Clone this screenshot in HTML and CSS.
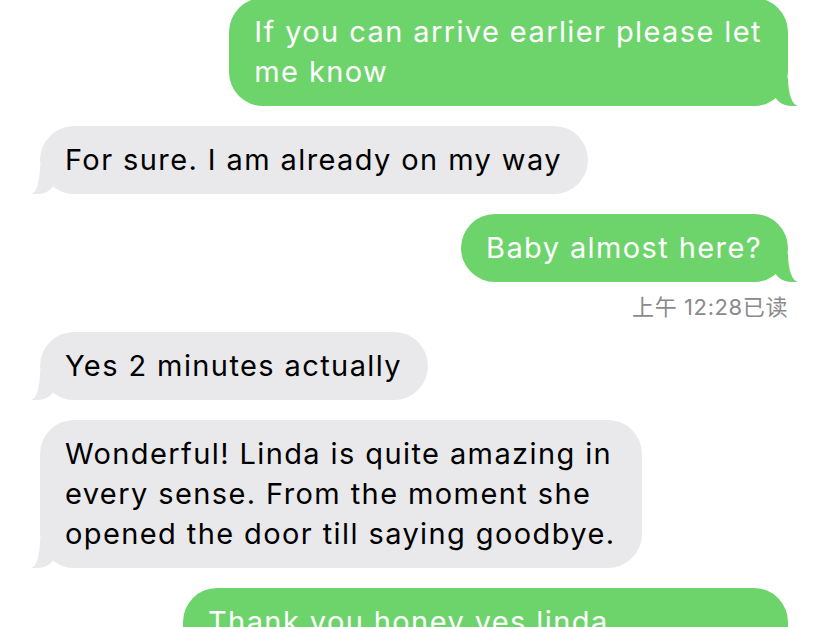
FILE: index.html
```html
<!DOCTYPE html>
<html lang="en">
<head>
<meta charset="utf-8">
<title>Messages</title>
<link rel="stylesheet" href="styles.css">
</head>
<body>
<main class="thread">
  <div class="row sent">
    <div class="bubble sent-bubble">If you can arrive earlier please let<br>me know</div>
  </div>
  <div class="row recv">
    <div class="bubble recv-bubble">For sure. I am already on my way</div>
  </div>
  <div class="row sent">
    <div class="bubble sent-bubble">Baby almost here?</div>
  </div>
  <div class="status">上午 12:28已读</div>
  <div class="row recv">
    <div class="bubble recv-bubble">Yes 2 minutes actually</div>
  </div>
  <div class="row recv">
    <div class="bubble recv-bubble">Wonderful! Linda is quite amazing in<br>every sense. From the moment she<br>opened the door till saying goodbye.</div>
  </div>
  <div class="row sent">
    <div class="bubble sent-bubble bubble-max">Thank you honey yes linda<br>definitely</div>
  </div>
</main>
</body>
</html>
```

FILE: styles.css
```css
html, body {
  margin: 0;
  padding: 0;
  background: #ffffff;
  height: 627px;
  overflow: hidden;
}

body {
  font-family: Inter, "Noto Sans", sans-serif;
}

.thread {
  display: flex;
  flex-direction: column;
  padding: 0 40px;
  margin-top: -2px;
}

.row {
  display: flex;
  margin-bottom: 20px;
}

.row.sent {
  justify-content: flex-end;
}

.row.recv {
  justify-content: flex-start;
}

.bubble {
  position: relative;
  box-sizing: border-box;
  padding: 14px 26px 14px 25px;
  border-radius: 34px;
  font-size: 29px;
  line-height: 40px;
  letter-spacing: 1.4px;
  white-space: nowrap;
}

.bubble-max {
  width: 605px;
}

.sent-bubble {
  background: #6dd46c;
  color: #ffffff;
}

.recv-bubble {
  background: #e9e9eb;
  color: #000000;
}

/* tails */
.sent-bubble::before,
.sent-bubble::after,
.recv-bubble::before,
.recv-bubble::after {
  content: "";
  position: absolute;
  bottom: 0;
}

.sent-bubble::before {
  right: -10px;
  width: 24px;
  height: 28px;
  background: #6dd46c;
  border-bottom-left-radius: 18px 14px;
}

.sent-bubble::after {
  right: -40px;
  width: 40px;
  height: 30px;
  background: #ffffff;
  border-bottom-left-radius: 10px 28px;
}

.recv-bubble::before {
  left: -9px;
  width: 24px;
  height: 28px;
  background: #e9e9eb;
  border-bottom-right-radius: 18px 14px;
}

.recv-bubble::after {
  left: -40px;
  width: 40px;
  height: 30px;
  background: #ffffff;
  border-bottom-right-radius: 9px 28px;
}

.status {
  align-self: flex-end;
  margin: -9px 0 11px;
  font-family: Inter, "Noto Sans CJK SC", sans-serif;
  font-size: 22px;
  line-height: 28px;
  letter-spacing: 0.6px;
  color: #8a8a8e;
}
```
